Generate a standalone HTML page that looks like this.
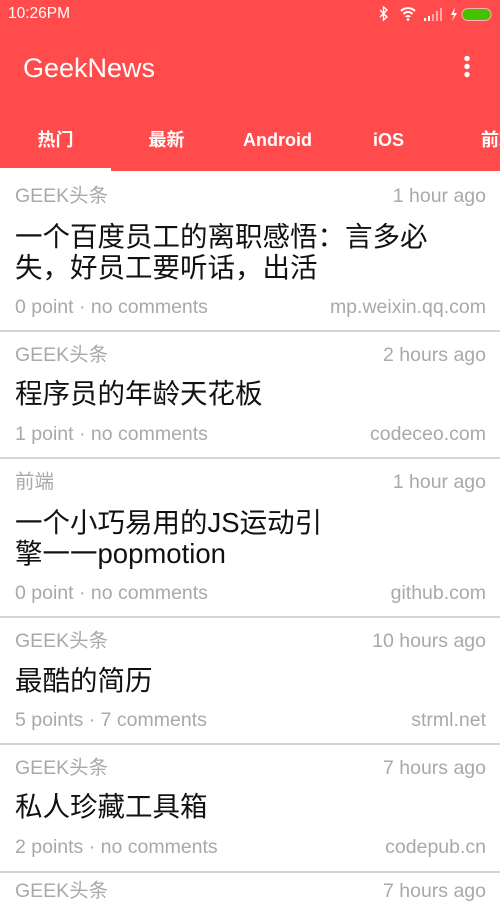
<!DOCTYPE html>
<html><head><meta charset="utf-8"><style>
*{margin:0;padding:0;box-sizing:border-box}
body{width:500px;height:888px;overflow:hidden;background:#fff;position:relative;font-family:"Liberation Sans","Noto Sans CJK SC",sans-serif}
.hdr{position:absolute;left:0;top:0;width:500px;height:171px;background:#ff4b4b}
.sb{position:absolute;top:0;height:28px;line-height:28px;color:#fff;font-size:15.5px}
.t{position:absolute;color:#fff}
.tab{position:absolute;top:126px;height:28px;line-height:28px;color:#fff;font-weight:bold;font-size:18px;text-align:center;width:111px;white-space:nowrap}
.ind{position:absolute;left:0;top:168px;width:111px;height:3px;background:#fff}
.it{position:absolute;left:0;width:500px;border-bottom:2px solid #d4d4d4}
.m{position:absolute;font-size:19.5px;color:#a9a9a9;height:26px;line-height:26px;white-space:nowrap}
.l{left:15px}.r{right:14px}
.ti{position:absolute;left:15px;font-size:27.5px;line-height:31px;color:#111;white-space:nowrap}
</style></head><body>
<div class="hdr"></div>
<div class="sb" style="left:8px">10:26PM</div>
<svg style="position:absolute;left:378px;top:6px" width="116" height="16" viewBox="0 0 116 16">
<path d="M2 4l7 7-3.5 3V1L9 4 2 11" fill="none" stroke="#fff" stroke-width="1.4"/>
<path d="M23 5a10 10 0 0 1 14 0M25.5 8a6 6 0 0 1 9 0M28 11a2.5 2.5 0 0 1 4 0" fill="none" stroke="#fff" stroke-width="2"/>
<circle cx="30" cy="13.5" r="1.3" fill="#fff"/>
<rect x="46" y="12" width="2" height="3" fill="#fff"/><rect x="50" y="10" width="2" height="5" fill="#fff"/><rect x="54" y="8" width="2" height="7" fill="#ffaaaa"/><rect x="58" y="5" width="2" height="10" fill="#ffaaaa"/><rect x="62" y="2" width="2" height="13" fill="#ffaaaa"/>
<path d="M77 1l-4 8h3l-2 6 5-8h-3z" fill="#fff"/>
<rect x="84" y="2.5" width="29" height="12" rx="6" fill="#44c100" stroke="#ffb0b0" stroke-width="1"/>
</svg>
<div class="t" style="left:23px;top:52px;font-size:27px;line-height:32px">GeekNews</div>
<svg style="position:absolute;left:460px;top:55px" width="14" height="24"><circle cx="7" cy="3.5" r="2.7" fill="#fff"/><circle cx="7" cy="11.5" r="2.7" fill="#fff"/><circle cx="7" cy="19.5" r="2.7" fill="#fff"/></svg>
<div class="tab" style="left:0">热门</div>
<div class="tab" style="left:111px">最新</div>
<div class="tab" style="left:222px">Android</div>
<div class="tab" style="left:333px">iOS</div>
<div class="tab" style="left:481px;width:auto;text-align:left">前端</div>
<div class="ind"></div>

<div class="it" style="top:171px;height:161px">
<div class="m l" style="top:12px">GEEK头条</div><div class="m r" style="top:12px">1 hour ago</div>
<div class="ti" style="top:50px">一个百度员工的离职感悟：言多必<br>失，好员工要听话，出活</div>
<div class="m l" style="top:123px">0 point · no comments</div><div class="m r" style="top:123px">mp.weixin.qq.com</div>
</div>
<div class="it" style="top:332px;height:127px">
<div class="m l" style="top:10px">GEEK头条</div><div class="m r" style="top:10px">2 hours ago</div>
<div class="ti" style="top:46px">程序员的年龄天花板</div>
<div class="m l" style="top:89px">1 point · no comments</div><div class="m r" style="top:89px">codeceo.com</div>
</div>
<div class="it" style="top:459px;height:159px">
<div class="m l" style="top:10px">前端</div><div class="m r" style="top:10px">1 hour ago</div>
<div class="ti" style="top:48px">一个小巧易用的JS运动引<br>擎一一popmotion</div>
<div class="m l" style="top:121px">0 point · no comments</div><div class="m r" style="top:121px">github.com</div>
</div>
<div class="it" style="top:618px;height:127px">
<div class="m l" style="top:10px">GEEK头条</div><div class="m r" style="top:10px">10 hours ago</div>
<div class="ti" style="top:47px">最酷的简历</div>
<div class="m l" style="top:89px">5 points · 7 comments</div><div class="m r" style="top:89px">strml.net</div>
</div>
<div class="it" style="top:745px;height:128px">
<div class="m l" style="top:10px">GEEK头条</div><div class="m r" style="top:10px">7 hours ago</div>
<div class="ti" style="top:46px">私人珍藏工具箱</div>
<div class="m l" style="top:89px">2 points · no comments</div><div class="m r" style="top:89px">codepub.cn</div>
</div>
<div class="m l" style="top:878px">GEEK头条</div><div class="m r" style="top:878px">7 hours ago</div>
</body></html>
